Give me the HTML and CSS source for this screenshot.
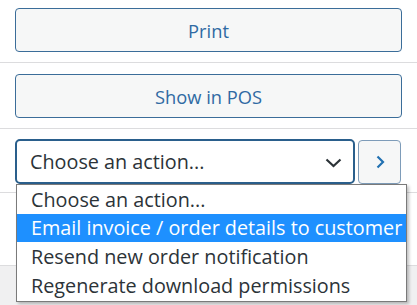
FILE: index.html
```html
<!DOCTYPE html>
<html lang="en">
<head>
<meta charset="utf-8">
<title>Order actions</title>
<link rel="stylesheet" href="styles.css">
</head>
<body>
<div class="panel">
  <div class="row row-first">
    <button class="btn">Print</button>
  </div>
  <div class="row row-second">
    <button class="btn">Show in POS</button>
  </div>
  <div class="row row-actions">
    <div class="select">
      <span class="select-text">Choose an action...</span>
      <svg class="select-chevron" width="17" height="10" viewBox="0 0 17 10"><polyline points="1.5,1.5 8.5,8 15.5,1.5" fill="none" stroke="#2c3338" stroke-width="2.2"/></svg>
    </div>
    <button class="go"><svg width="9" height="14" viewBox="0 0 9 14"><polyline points="1.5,1.5 7,7 1.5,12.5" fill="none" stroke="#2271b1" stroke-width="2.2"/></svg></button>
    <ul class="dropdown">
      <li>Choose an action...</li>
      <li class="active">Email invoice / order details to customer</li>
      <li>Resend new order notification</li>
      <li>Regenerate download permissions</li>
    </ul>
  </div>
  <div class="row row-empty"></div>
  <div class="footer"></div>
</div>
</body>
</html>
```

FILE: styles.css
```css
html, body {
  margin: 0;
  padding: 0;
  background: #ffffff;
  font-family: "Open Sans", "Noto Sans", Arial, sans-serif;
}

.panel {
  width: 417px;
  height: 305px;
  display: flex;
  flex-direction: column;
  overflow: hidden;
}

.row {
  padding: 0 15px;
  border-bottom: 1px solid #dcdcde;
}

.row-first {
  padding-top: 8px;
  padding-bottom: 10px;
}

.row-second {
  padding-top: 11px;
  padding-bottom: 10px;
}

.btn {
  display: block;
  width: 100%;
  height: 44px;
  margin: 0;
  background: #f6f7f7;
  border: 1px solid #3b6d99;
  border-radius: 4px;
  color: #2f6aa3;
  font-family: "Open Sans", "Noto Sans", Arial, sans-serif;
  font-size: 18.3px;
  padding: 0;
}

.row-actions {
  position: relative;
  display: flex;
  align-items: flex-start;
  gap: 3px;
  padding-top: 10px;
  padding-bottom: 8px;
}

.select {
  box-sizing: border-box;
  width: 340px;
  height: 45px;
  border: 2px solid #2a5f8c;
  border-radius: 5px;
  background: #ffffff;
  display: flex;
  align-items: center;
  justify-content: space-between;
  padding: 0 11px 0 13px;
  color: #2c3338;
  font-size: 19.8px;
}

.select-chevron {
  display: block;
  margin-top: 2px;
}

.go {
  box-sizing: border-box;
  width: 43px;
  height: 44px;
  margin: 1px 0 0 0;
  padding: 0;
  background: #f6f7f7;
  border: 1px solid #7e9cb9;
  border-radius: 4px;
  display: flex;
  align-items: center;
  justify-content: center;
}

.go svg {
  display: block;
  margin-left: 2px;
}

.dropdown {
  position: absolute;
  left: 16px;
  top: 55px;
  box-sizing: border-box;
  width: 391px;
  height: 118px;
  margin: 0;
  padding: 0;
  list-style: none;
  background: #ffffff;
  border: 1px solid #7a7a7a;
  box-shadow: 2px 2px 3px rgba(0, 0, 0, 0.25);
  z-index: 2;
}

.dropdown li {
  height: 29px;
  line-height: 29px;
  padding-left: 14px;
  color: #2c3338;
  font-size: 19.8px;
  white-space: nowrap;
}

.dropdown li.active {
  height: 28px;
  line-height: 28px;
  background: #1e90ff;
  color: #ffffff;
}

.row-empty {
  height: 72px;
  padding: 0;
}

.footer {
  flex: 1;
  background: #f0f0f1;
}
```
